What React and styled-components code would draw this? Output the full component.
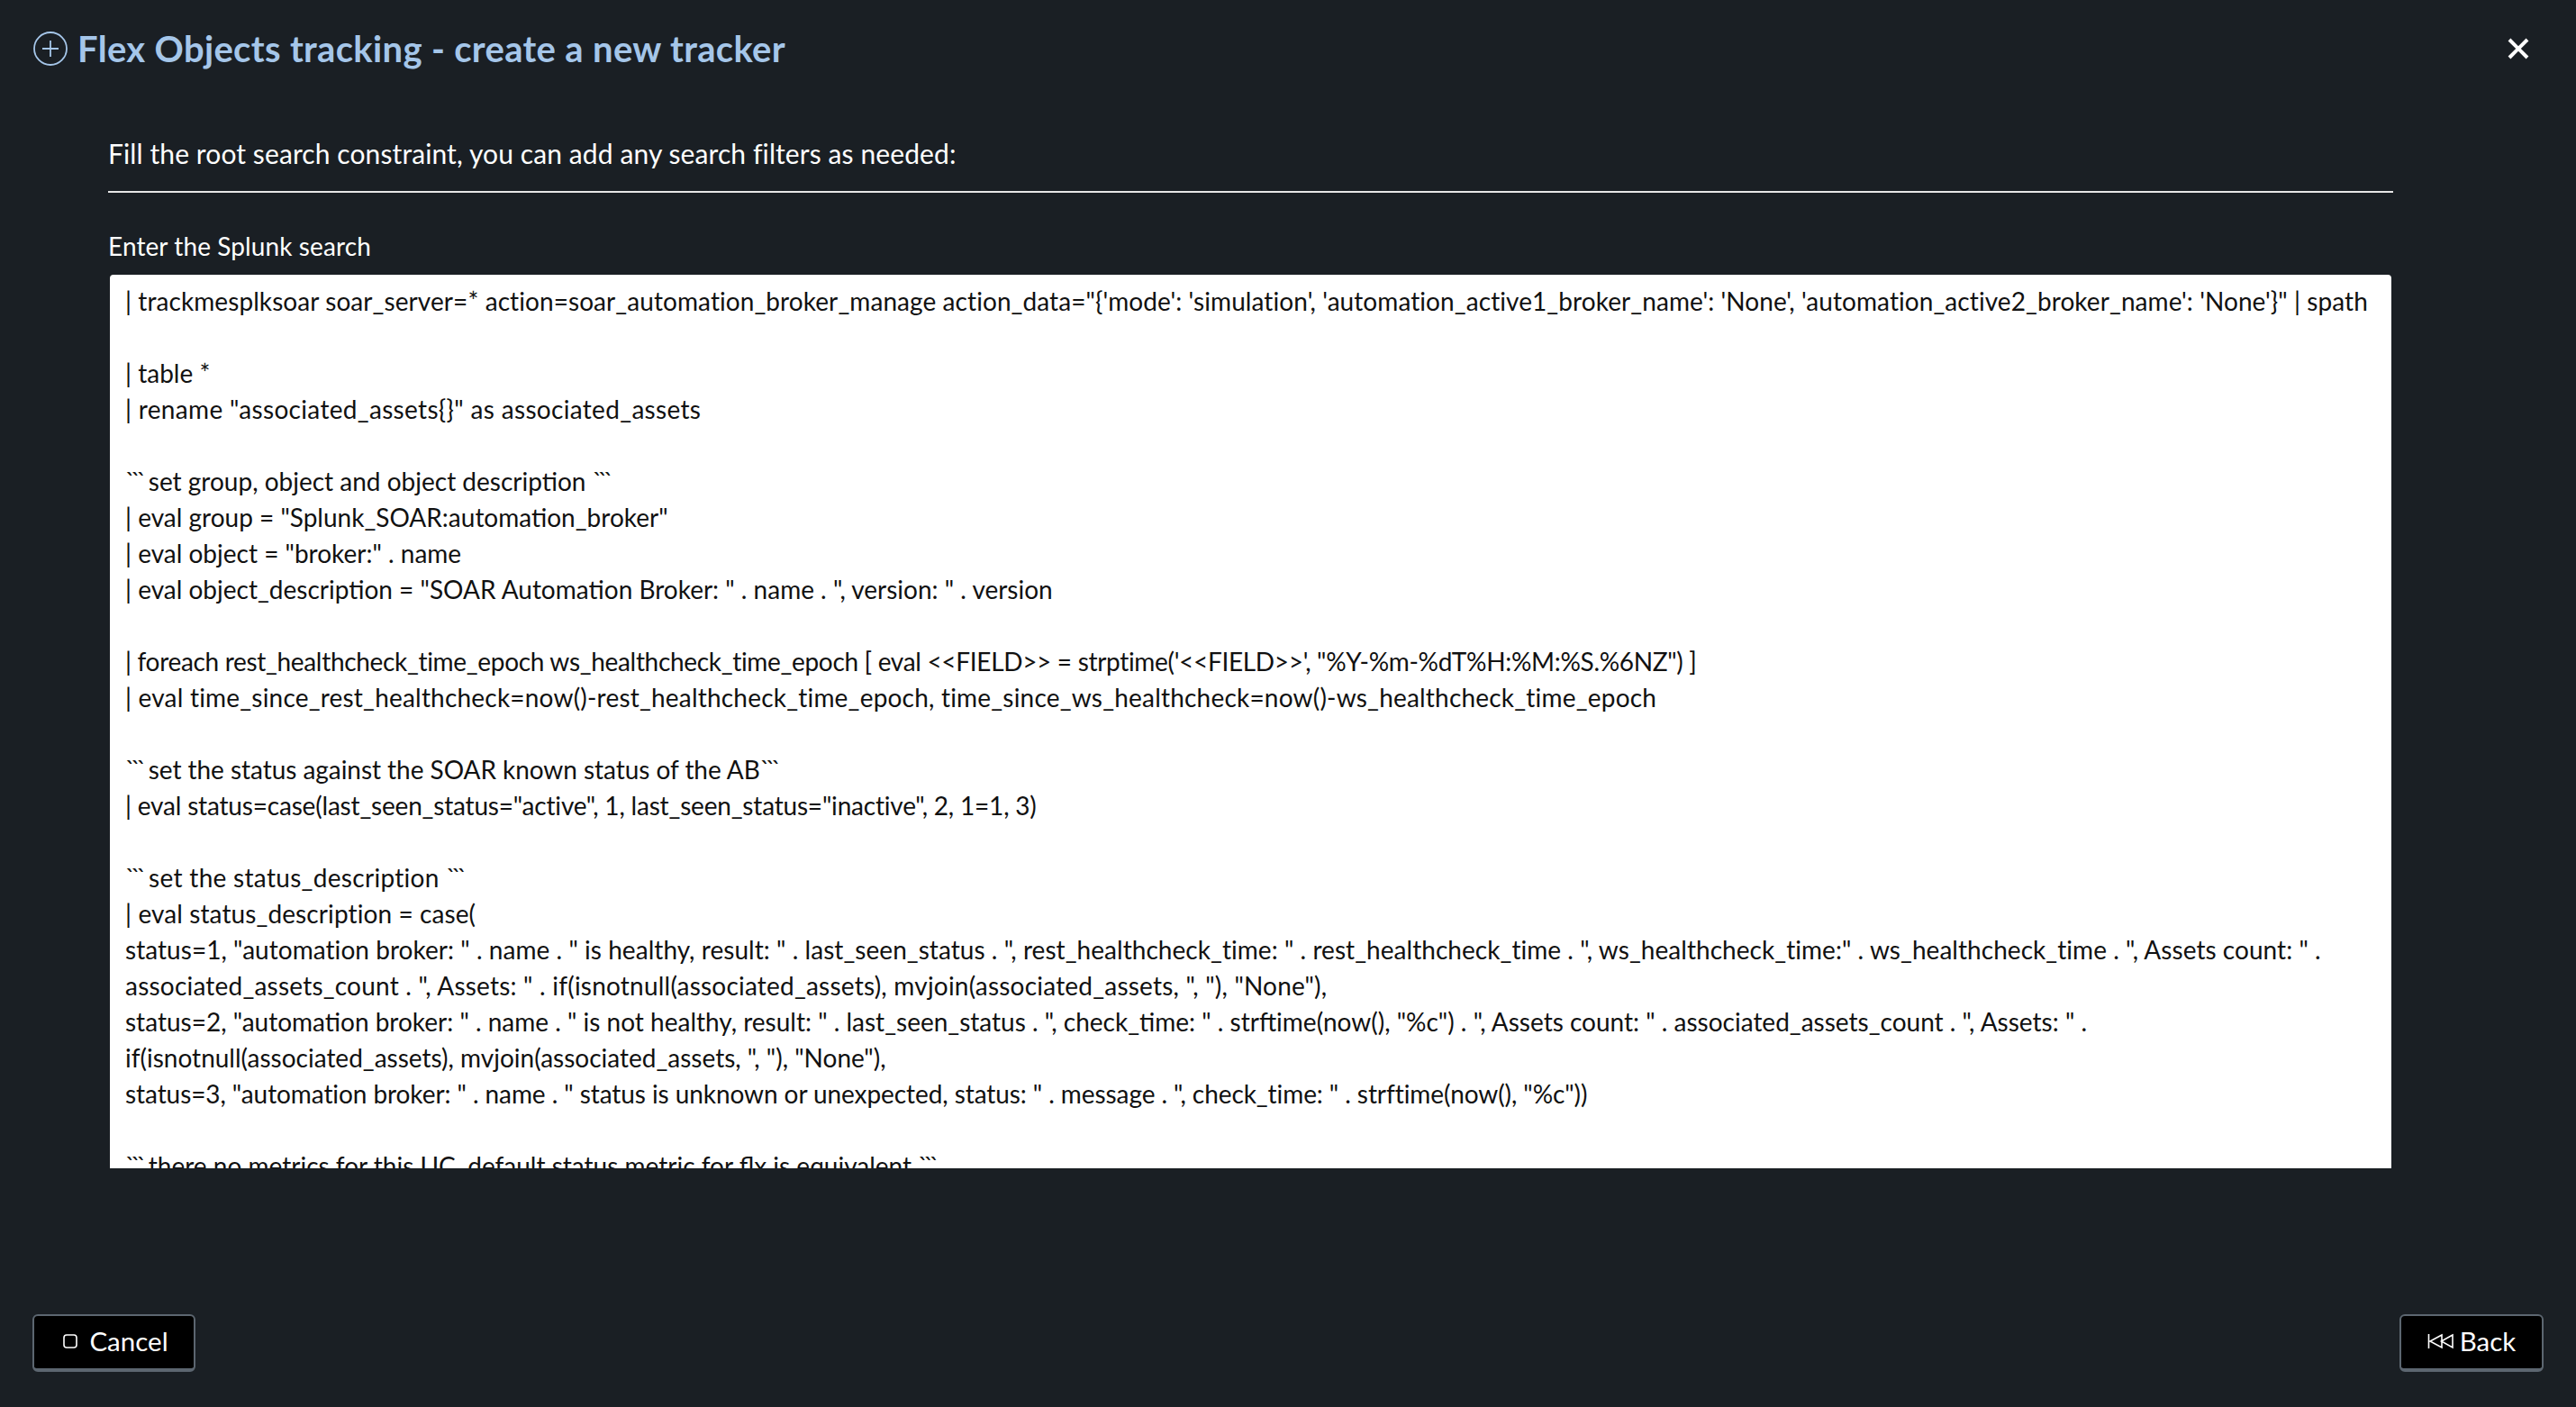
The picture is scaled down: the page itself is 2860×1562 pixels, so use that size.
import React from 'react'
import styled, { createGlobalStyle } from 'styled-components'

const GlobalStyle = createGlobalStyle`
  html, body {
    margin: 0;
    padding: 0;
    background: #1a1f24;
  }
`

const Page = styled.div`
  box-sizing: border-box;
  height: 100vh;
  display: flex;
  flex-direction: column;
  background: #1a1f24;
  color: #fff;
  font-family: Lato, "Liberation Sans", sans-serif;
  overflow: hidden;
`

const Header = styled.header`
  display: flex;
  align-items: center;
  justify-content: space-between;
  height: 40px;
  padding: 34px 52px 0 37px;
`

const TitleWrap = styled.div`
  display: flex;
  align-items: center;
  gap: 11px;
`

const Title = styled.h1`
  margin: 0;
  font-size: 40px;
  line-height: 40px;
  font-weight: 700;
  letter-spacing: 0.33px;
  color: #a5c6e9;
`

const CloseButton = styled.button`
  display: flex;
  padding: 0;
  background: none;
  border: 0;
  color: #fff;
`

const Body = styled.main`
  flex: 1;
  display: flex;
  flex-direction: column;
  padding: 78px 203px 0 120px;
`

const Section = styled.h2`
  margin: 0;
  padding-bottom: 24px;
  border-bottom: 2px solid #e6e6e6;
  font-size: 30px;
  line-height: 36px;
  font-weight: 400;
  letter-spacing: 0.1px;
`

const FieldLabel = styled.label`
  display: block;
  margin: 42px 0 15px 0;
  font-size: 28px;
  line-height: 34px;
  letter-spacing: 0.1px;
`

const SearchBox = styled.div`
  box-sizing: border-box;
  width: 2533px;
  height: 992px;
  margin-left: 2px;
  padding: 9px 17px 0;
  border-radius: 4px 4px 0 0;
  background: #fff;
  color: #111;
  font-size: 28px;
  line-height: 40px;
  overflow: hidden;
`

const SearchLine = styled.div`
  min-height: 40px;
  white-space: pre;
  letter-spacing: ${p => p.$track || 0}px;
`

// the triple backticks sit much tighter in the original font
const Ticks = styled.span`
  letter-spacing: -5px;
`

const Footer = styled.footer`
  display: flex;
  justify-content: space-between;
  padding: 0 36px 39px;
`

const ActionButton = styled.button`
  box-sizing: border-box;
  display: flex;
  align-items: center;
  justify-content: center;
  gap: ${p => p.$gap}px;
  width: ${p => p.$width}px;
  height: 64px;
  padding: 0 0 3px ${p => p.$shift || 0}px;
  background: #000;
  border: 2px solid #5c6670;
  border-bottom-width: 4px;
  border-radius: 6px;
  color: #fff;
  font-family: inherit;
  font-size: 29.500px;
`

const T = '```'

// [text, letter-spacing] per line of the search
const SEARCH = [
  [`| trackmesplksoar soar_server=* action=soar_automation_broker_manage action_data="{'mode': 'simulation', 'automation_active1_broker_name': 'None', 'automation_active2_broker_name': 'None'}" | spath`, 0.075],
  [''],
  ['| table *'],
  ['| rename "associated_assets{}" as associated_assets', 0.32],
  [''],
  [<><Ticks>{T}</Ticks> set group, object and object description <Ticks>{T}</Ticks></>],
  ['| eval group = "Splunk_SOAR:automation_broker"'],
  ['| eval object = "broker:" . name'],
  ['| eval object_description = "SOAR Automation Broker: " . name . ", version: " . version'],
  [''],
  [`| foreach rest_healthcheck_time_epoch ws_healthcheck_time_epoch [ eval <<FIELD>> = strptime('<<FIELD>>', "%Y-%m-%dT%H:%M:%S.%6NZ") ]`, -0.32],
  ['| eval time_since_rest_healthcheck=now()-rest_healthcheck_time_epoch, time_since_ws_healthcheck=now()-ws_healthcheck_time_epoch', 0.2],
  [''],
  [<><Ticks>{T}</Ticks> set the status against the SOAR known status of the AB<Ticks>{T}</Ticks></>, -0.05],
  ['| eval status=case(last_seen_status="active", 1, last_seen_status="inactive", 2, 1=1, 3)', -0.19],
  [''],
  [<><Ticks>{T}</Ticks> set the status_description <Ticks>{T}</Ticks></>, 0.3],
  ['| eval status_description = case(', 0.1],
  ['status=1, "automation broker: " . name . " is healthy, result: " . last_seen_status . ", rest_healthcheck_time: " . rest_healthcheck_time . ", ws_healthcheck_time:" . ws_healthcheck_time . ", Assets count: " .', 0.045],
  ['associated_assets_count . ", Assets: " . if(isnotnull(associated_assets), mvjoin(associated_assets, ", "), "None"),', 0.21],
  ['status=2, "automation broker: " . name . " is not healthy, result: " . last_seen_status . ", check_time: " . strftime(now(), "%c") . ", Assets count: " . associated_assets_count . ", Assets: " .'],
  ['if(isnotnull(associated_assets), mvjoin(associated_assets, ", "), "None"),'],
  ['status=3, "automation broker: " . name . " status is unknown or unexpected, status: " . message . ", check_time: " . strftime(now(), "%c"))', -0.08],
  [''],
  [<><Ticks>{T}</Ticks> there no metrics for this UC, default status metric for flx is equivalent <Ticks>{T}</Ticks></>],
]

function PlusCircle() {
  return (
    <svg width="38" height="38" viewBox="0 0 38 38" fill="none" stroke="#a5c6e9" strokeWidth="1.8">
      <circle cx="19" cy="19" r="18" />
      <path d="M19 10v18M10 19h18" />
    </svg>
  )
}

function CloseIcon() {
  return (
    <svg width="24" height="24" viewBox="0 0 24 24" fill="none" stroke="#fff" strokeWidth="4">
      <path d="M2 2l20 20M22 2L2 22" />
    </svg>
  )
}

function StopIcon() {
  return (
    <svg width="16" height="16" viewBox="0 0 16 16" fill="none" stroke="#fff" strokeWidth="1.6">
      <rect x="1" y="1" width="14" height="14" rx="3" />
    </svg>
  )
}

function SkipBackIcon() {
  return (
    <svg width="30" height="18" viewBox="0 0 30 18" fill="none" stroke="#fff" strokeWidth="1.6">
      <path d="M1.500 1v16M16 2L3 9l13 7zM28 2L15.500 9 28 16z" />
    </svg>
  )
}

export default function App() {
  return (
    <Page>
      <GlobalStyle />
      <Header>
        <TitleWrap>
          <PlusCircle />
          <Title>Flex Objects tracking - create a new tracker</Title>
        </TitleWrap>
        <CloseButton aria-label="Close"><CloseIcon /></CloseButton>
      </Header>
      <Body>
        <Section>Fill the root search constraint, you can add any search filters as needed:</Section>
        <FieldLabel>Enter the Splunk search</FieldLabel>
        <SearchBox>
          {SEARCH.map(([text, track], i) => (
            <SearchLine key={i} $track={track}>{text}</SearchLine>
          ))}
        </SearchBox>
      </Body>
      <Footer>
        <ActionButton $width={181} $gap={13} $shift={4}><StopIcon />Cancel</ActionButton>
        <ActionButton $width={160} $gap={6}><SkipBackIcon />Back</ActionButton>
      </Footer>
    </Page>
  )
}
